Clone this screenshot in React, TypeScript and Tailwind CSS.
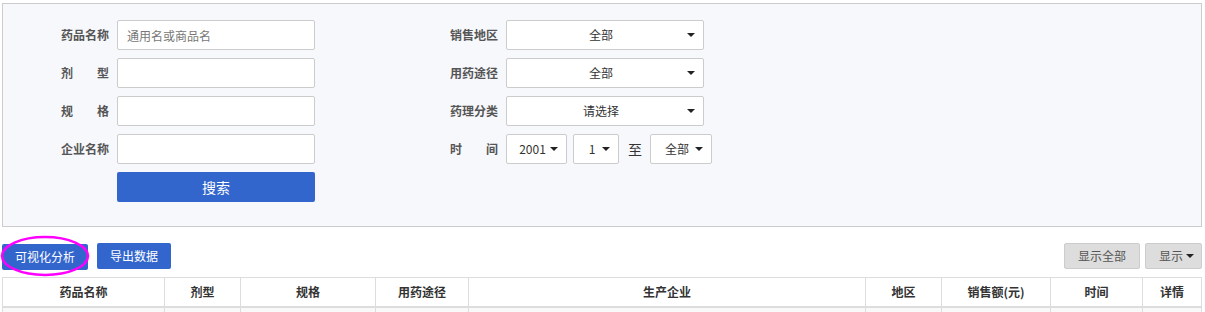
import { ChevronDown } from 'lucide-react'

const font = { fontFamily: '"Noto Sans CJK SC", "Noto Sans", sans-serif' }

function Caret() {
  return <span className="inline-block w-0 h-0 border-l-[4px] border-r-[4px] border-t-[4px] border-l-transparent border-r-transparent border-t-[#222]" />
}

function Label({ text, spaced }: { text: string; spaced?: boolean }) {
  return (
    <span className={"w-[48px] shrink-0 text-[12px] font-bold text-[#555] " + (spaced ? "flex justify-between" : "")}>
      {spaced ? text.split('').map((c, i) => <span key={i}>{c}</span>) : text}
    </span>
  )
}

function Input({ placeholder }: { placeholder?: string }) {
  return (
    <input
      className="w-[198px] h-[30px] bg-white border border-[#ccc] rounded-[2px] px-[9px] text-[12px] text-[#555] placeholder:text-[#777] outline-none"
      placeholder={placeholder}
      style={font}
    />
  )
}

function Select({ value, w }: { value: string; w: string }) {
  return (
    <div className={"h-[30px] bg-white border border-[#ccc] rounded-[2px] flex items-center pl-2 pr-[8px] text-[12px] text-[#333] " + w}>
      <span className="flex-1 text-center">{value}</span>
      <Caret />
    </div>
  )
}

const cols = [
  { name: '药品名称', w: 'w-[162px]' },
  { name: '剂型', w: 'w-[76px]' },
  { name: '规格', w: 'w-[135px]' },
  { name: '用药途径', w: 'w-[93px]' },
  { name: '生产企业', w: 'w-[397px]' },
  { name: '地区', w: 'w-[76px]' },
  { name: '销售额(元)', w: 'w-[109px]' },
  { name: '时间', w: 'w-[92px]' },
  { name: '详情', w: 'flex-1' },
]

export default function App() {
  return (
    <div className="w-[1205px] h-[312px] overflow-hidden bg-white pl-[2px] pr-[3px] pt-[3px]" style={font}>
      {/* search panel */}
      <div className="h-[224px] bg-[#f7f8fc] border border-[#ccc] pt-[16px] pl-[58px] flex gap-[135px]">
        <div className="flex flex-col gap-[8px]">
          {[
            { t: '药品名称', p: '通用名或商品名' },
            { t: '剂型', s: true },
            { t: '规格', s: true },
            { t: '企业名称' },
          ].map((r) => (
            <div key={r.t} className="flex items-center gap-[8px]">
              <Label text={r.t} spaced={r.s} />
              <Input placeholder={r.p} />
            </div>
          ))}
          <div className="flex gap-[8px]">
            <span className="w-[48px]" />
            <button className="w-[198px] h-[30px] bg-[#3366cc] rounded-[2px] text-white text-[14px]">搜索</button>
          </div>
        </div>
        <div className="flex flex-col gap-[8px]">
          {['销售地区', '用药途径', '药理分类'].map((t, i) => (
            <div key={t} className="flex items-center gap-[8px]">
              <Label text={t} />
              <Select value={i === 2 ? '请选择' : '全部'} w="w-[198px]" />
            </div>
          ))}
          <div className="flex items-center gap-[8px]">
            <Label text="时间" spaced />
            <Select value="2001" w="w-[61px]" />
            <Select value="1" w="w-[46px] -ml-[2px]" />
            <span className="text-[14px] text-[#333] mx-[1px]">至</span>
            <Select value="全部" w="w-[62px] -ml-[1px]" />
          </div>
        </div>
      </div>

      {/* toolbar */}
      <div className="flex items-center justify-between mt-[16px] h-[26px]">
        <div className="flex gap-[9px]">
          <div className="relative">
            <button className="h-[26px] px-[13px] bg-[#3366cc] rounded-[2px] text-white text-[12px]">可视化分析</button>
            <svg className="absolute left-[-2px] top-[-8px] pointer-events-none" width="90" height="42" viewBox="0 0 90 42">
              <ellipse cx="45" cy="21" rx="43" ry="19" fill="none" stroke="#f0f" strokeWidth="2.5" />
            </svg>
          </div>
          <button className="h-[26px] px-[13px] bg-[#3366cc] rounded-[2px] text-white text-[12px]">导出数据</button>
        </div>
        <div className="flex gap-[5px]">
          <button className="h-[26px] px-[13px] bg-[#ddd] border border-[#ccc] rounded-[2px] text-[12px] text-[#555]">显示全部</button>
          <button className="h-[26px] pl-[13px] pr-[7px] bg-[#ddd] border border-[#ccc] rounded-[2px] text-[12px] text-[#555] flex items-center gap-[3px]">
            显示 <Caret />
          </button>
        </div>
      </div>

      {/* table */}
      <div className="mt-[8px] border-t border-l border-r border-[#ddd]">
        <div className="flex h-[30px] border-b-2 border-[#ddd]">
          {cols.map((c, i) => (
            <div key={c.name} className={c.w + " flex items-center justify-center text-[12px] font-bold text-[#333] " + (i < cols.length - 1 ? "border-r border-[#ddd]" : "")}>
              {c.name}
            </div>
          ))}
        </div>
        <div className="flex h-[20px] bg-[#f9f9f9]">
          {cols.map((c, i) => (
            <div key={c.name} className={c.w + " " + (i < cols.length - 1 ? "border-r border-[#ddd]" : "")} />
          ))}
        </div>
      </div>
      <span className="hidden"><ChevronDown size={1} /></span>
    </div>
  )
}
